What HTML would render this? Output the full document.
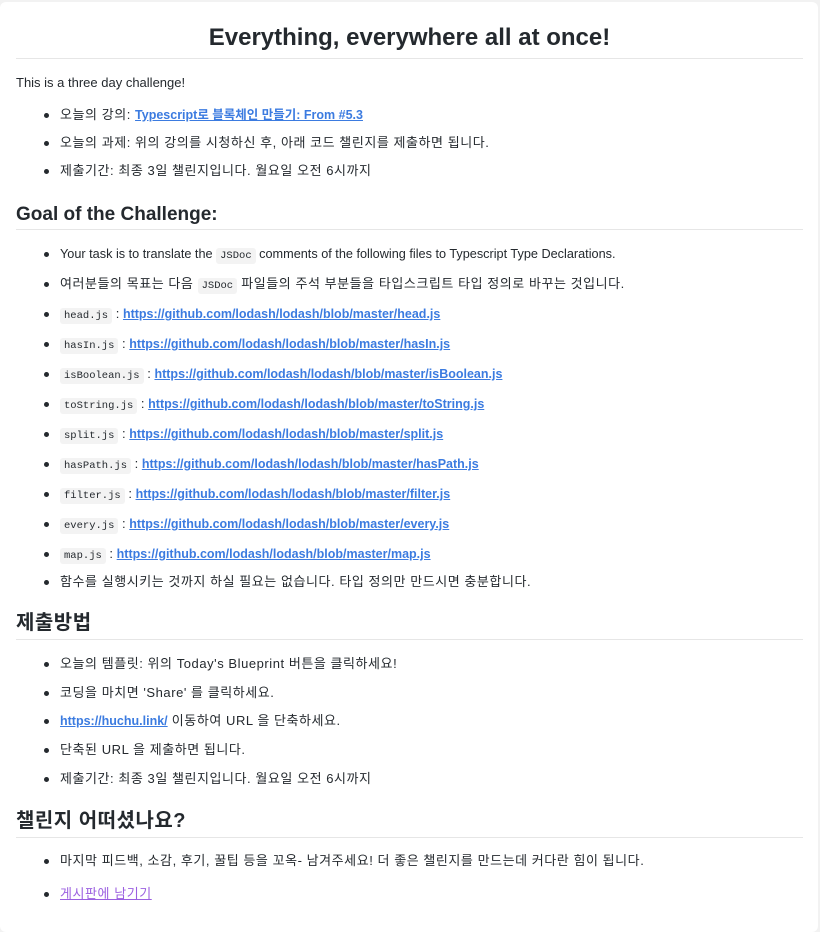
<!DOCTYPE html>
<html><head><meta charset="utf-8"><style>
html,body{margin:0;padding:0;background:#f2f2f2;}
body{width:820px;height:914px;overflow:hidden;font-family:"Liberation Sans","Noto Sans CJK KR",sans-serif;color:#24292e;font-size:13px;}
.card{position:absolute;left:0;top:2px;width:818px;height:930px;background:#fff;border-radius:6px;}
.in{position:absolute;left:16px;top:0;width:787px;}
h1{margin:0;position:absolute;top:20px;left:0;width:787px;text-align:center;font-size:24px;line-height:32px;font-weight:bold;}
.hr{position:absolute;left:0;width:787px;height:1px;background:#e6e6e6;}
h2{position:absolute;left:0;margin:0;font-size:19px;line-height:24px;font-weight:bold;}
h2.k{font-size:20px;letter-spacing:0.5px;}
.t{position:absolute;left:0;line-height:18px;white-space:nowrap;}
.li{position:absolute;left:44px;line-height:18px;white-space:nowrap;}
.k{letter-spacing:0.55px;}
.li:before{content:"";position:absolute;left:-16px;top:7px;width:5px;height:5px;border-radius:50%;background:#24292e;}
a{color:#3b7be0;text-decoration:underline;}
a.b{font-weight:bold;font-size:12.5px;letter-spacing:0;}
a.v{color:#9b5fe0;}
code{font-family:"Liberation Mono",monospace;font-size:10.5px;background:#f3f3f3;padding:2px 4px;border-radius:3px;letter-spacing:0;}
</style></head><body>
<div class="card"><div class="in">
<h1>Everything, everywhere all at once!</h1>
<div class="hr" style="top:56px"></div>
<div class="t" style="top:72px">This is a three day challenge!</div>
<div class="li k" style="top:104px">오늘의 강의: <a class="b">Typescript로 블록체인 만들기: From #5.3</a></div>
<div class="li k" style="top:132px">오늘의 과제: 위의 강의를 시청하신 후, 아래 코드 챌린지를 제출하면 됩니다.</div>
<div class="li k" style="top:160px">제출기간: 최종 3일 챌린지입니다. 월요일 오전 6시까지</div>
<h2 style="top:201px">Goal of the Challenge:</h2>
<div class="hr" style="top:227px"></div>
<div class="li" style="top:243px;font-size:12.7px">Your task is to translate the <code>JSDoc</code> comments of the following files to Typescript Type Declarations.</div>
<div class="li k" style="top:273px">여러분들의 목표는 다음 <code>JSDoc</code> 파일들의 주석 부분들을 타입스크립트 타입 정의로 바꾸는 것입니다.</div>
<div class="li" style="top:303px"><code>head.js</code> : <a class="b">https://github.com/lodash/lodash/blob/master/head.js</a></div>
<div class="li" style="top:333px"><code>hasIn.js</code> : <a class="b">https://github.com/lodash/lodash/blob/master/hasIn.js</a></div>
<div class="li" style="top:363px"><code>isBoolean.js</code> : <a class="b">https://github.com/lodash/lodash/blob/master/isBoolean.js</a></div>
<div class="li" style="top:393px"><code>toString.js</code> : <a class="b">https://github.com/lodash/lodash/blob/master/toString.js</a></div>
<div class="li" style="top:423px"><code>split.js</code> : <a class="b">https://github.com/lodash/lodash/blob/master/split.js</a></div>
<div class="li" style="top:453px"><code>hasPath.js</code> : <a class="b">https://github.com/lodash/lodash/blob/master/hasPath.js</a></div>
<div class="li" style="top:483px"><code>filter.js</code> : <a class="b">https://github.com/lodash/lodash/blob/master/filter.js</a></div>
<div class="li" style="top:513px"><code>every.js</code> : <a class="b">https://github.com/lodash/lodash/blob/master/every.js</a></div>
<div class="li" style="top:543px"><code>map.js</code> : <a class="b">https://github.com/lodash/lodash/blob/master/map.js</a></div>
<div class="li k" style="top:571px">함수를 실행시키는 것까지 하실 필요는 없습니다. 타입 정의만 만드시면 충분합니다.</div>
<h2 class="k" style="top:609px">제출방법</h2>
<div class="hr" style="top:637px"></div>
<div class="li k" style="top:653px">오늘의 템플릿: 위의 Today's Blueprint 버튼을 클릭하세요!</div>
<div class="li k" style="top:682px">코딩을 마치면 'Share' 를 클릭하세요.</div>
<div class="li k" style="top:710px"><a class="b">https://huchu.link/</a> 이동하여 URL 을 단축하세요.</div>
<div class="li k" style="top:739px">단축된 URL 을 제출하면 됩니다.</div>
<div class="li k" style="top:768px">제출기간: 최종 3일 챌린지입니다. 월요일 오전 6시까지</div>
<h2 class="k" style="top:807px">챌린지 어떠셨나요?</h2>
<div class="hr" style="top:835px"></div>
<div class="li k" style="top:850px">마지막 피드백, 소감, 후기, 꿀팁 등을 꼬옥- 남겨주세요! 더 좋은 챌린지를 만드는데 커다란 힘이 됩니다.</div>
<div class="li k" style="top:883px"><a class="v">게시판에 남기기</a></div>
</div></div>
</body></html>
